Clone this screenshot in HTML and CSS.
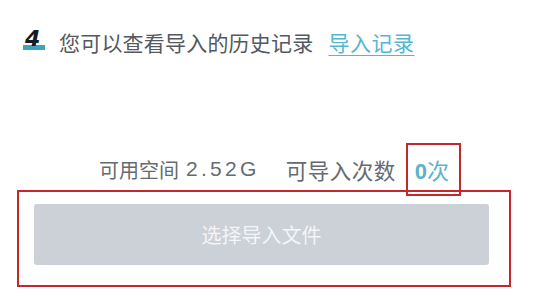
FILE: index.html
```html
<!DOCTYPE html>
<html lang="zh-CN">
<head>
<meta charset="utf-8">
<link rel="stylesheet" href="styles.css">
</head>
<body>
<div class="page">
  <div class="step">
    <span class="step-num"><span class="step-bar"></span><span class="step-digit">4</span></span>
    <span class="step-text">您可以查看导入的历史记录</span>
    <a class="step-link" href="#">导入记录</a>
  </div>
  <div class="quota">
    <span class="quota-label">可用空间</span>
    <span class="num">2.52G</span>
    <span class="quota-label quota-count">可导入次数</span>
    <span class="quota-value"><span class="zero">0</span>次</span>
  </div>
  <div class="action-box">
    <button class="import-btn" type="button">选择导入文件</button>
  </div>
</div>
</body>
</html>
```

FILE: styles.css
```css
html, body {
  margin: 0;
  padding: 0;
  background: #ffffff;
}
body {
  width: 552px;
  height: 296px;
  overflow: hidden;
  font-family: "Noto Sans CJK SC", "Noto Sans", sans-serif;
  color: #555a60;
}
.page {
  display: flex;
  flex-direction: column;
}
.step {
  display: flex;
  align-items: center;
  height: 30px;
  margin-top: 27px;
  padding-left: 23px;
  font-size: 21px;
}
.step-num {
  position: relative;
  width: 22px;
  height: 22px;
  margin-right: 14px;
}
.step-bar {
  position: absolute;
  left: 0;
  top: 14px;
  width: 22px;
  height: 5px;
  background: #3ea3bb;
}
.step-digit {
  position: absolute;
  left: 2px;
  top: -5px;
  font-family: "DejaVu Sans", sans-serif;
  font-weight: 700;
  font-style: italic;
  font-size: 22px;
  color: #141c25;
}
.step-text {
  color: #54595f;
  letter-spacing: 0.2px;
}
.step-link {
  margin-left: 15px;
  color: #56b6d0;
  letter-spacing: 0.5px;
  text-decoration: underline;
  text-decoration-thickness: 1px;
  text-underline-offset: 4px;
}
.quota {
  display: flex;
  align-items: center;
  height: 30px;
  margin-top: 97px;
  padding-left: 99px;
  font-size: 20px;
  color: #666b71;
}
.num {
  margin-left: 7px;
  font-family: "Liberation Sans", sans-serif;
  font-size: 21px;
  letter-spacing: 3.3px;
}
.quota-count {
  margin-left: 26px;
  font-size: 21.5px;
  letter-spacing: 0.5px;
}
.quota-value {
  margin: -9px 0 -9px 10px;
  padding: 8px 10px 9px 7px;
  border: 2px solid #c4282d;
  font-size: 22px;
  color: #5ab4cc;
  position: relative;
  z-index: 1;
}
.zero {
  font-family: "Liberation Sans", sans-serif;
  font-weight: 700;
}
.action-box {
  margin: 6px 0 0 17px;
  width: 475px;
  height: 81px;
  border: 2px solid #c4282d;
  padding: 12px 0 0 15px;
  box-sizing: content-box;
}
.import-btn {
  display: block;
  width: 455px;
  height: 61px;
  border: none;
  border-radius: 3px;
  background: #ccd0d7;
  color: #f4f5f7;
  font-family: "Noto Sans CJK SC", "Noto Sans", sans-serif;
  font-size: 20px;
  padding: 0;
}
```
